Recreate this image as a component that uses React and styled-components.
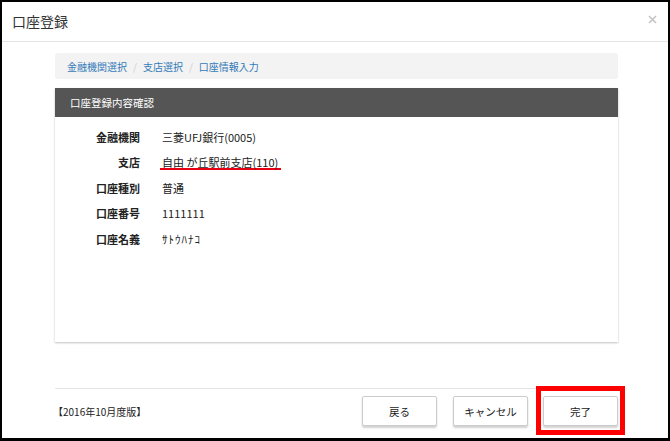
import React from "react";
import styled, { createGlobalStyle } from "styled-components";

const GlobalStyle = createGlobalStyle`
  *, *::before, *::after {
    box-sizing: border-box;
  }
  html, body {
    margin: 0;
    padding: 0;
    background: #fff;
  }
  body {
    font-family: "Noto Sans CJK JP", "Liberation Sans", sans-serif;
    color: #333;
  }
`;

const rows = [
  { label: "金融機関", value: "三菱UFJ銀行(0005)" },
  { label: "支店", value: "自由 が丘駅前支店(110)", marked: true },
  { label: "口座種別", value: "普通" },
  { label: "口座番号", value: "1111111" },
  { label: "口座名義", value: "ｻﾄｳﾊﾅｺ", narrow: true },
];

const App = () => {
  return (
    <>
      <GlobalStyle />
      <Frame>
        <Header>
          <Title>口座登録</Title>
          <CloseButton aria-label="閉じる">
            <svg width="9" height="9" viewBox="0 0 9 9">
              <path d="M1 1L8 8M8 1L1 8" stroke="#c4c4c4" strokeWidth="1.6" />
            </svg>
          </CloseButton>
        </Header>

        <Body>
          <Breadcrumb>
            <Crumb>金融機関選択</Crumb>
            <Sep>/</Sep>
            <Crumb>支店選択</Crumb>
            <Sep>/</Sep>
            <Crumb>口座情報入力</Crumb>
          </Breadcrumb>

          <Panel>
            <PanelHeading>口座登録内容確認</PanelHeading>
            <PanelBody>
              {rows.map((row) => (
                <React.Fragment key={row.label}>
                  <Label>{row.label}</Label>
                  <Value $spaced={row.narrow}>
                    {row.marked ? <Marked>{row.value}</Marked> : row.value}
                  </Value>
                </React.Fragment>
              ))}
            </PanelBody>
          </Panel>

          <Footer>
            <Edition>【2016年10月度版】</Edition>
            <Buttons>
              <Button>戻る</Button>
              <Button>キャンセル</Button>
              <Highlight>
                <Button>完了</Button>
              </Highlight>
            </Buttons>
          </Footer>
        </Body>
      </Frame>
    </>
  );
};

const Frame = styled.div`
  width: 670px;
  height: 441px;
  border: 2px solid #000;
  border-bottom-width: 3px;
  background: #fff;
  display: flex;
  flex-direction: column;
`;

const Header = styled.div`
  height: 40px;
  border-bottom: 1px solid #e5e5e5;
  display: flex;
  align-items: center;
  justify-content: space-between;
  padding: 0 11px 2px 10px;
`;

const Title = styled.h4`
  margin: 0;
  font-size: 14px;
  font-weight: normal;
  color: #333;
`;

const CloseButton = styled.span`
  display: flex;
  align-items: center;
  margin-top: -3px;
`;

const Body = styled.div`
  flex: 1;
  display: flex;
  flex-direction: column;
  padding: 11px 50px 0 53px;
`;

const Breadcrumb = styled.div`
  height: 26px;
  background: #f3f3f3;
  border-radius: 3px;
  display: flex;
  align-items: center;
  padding: 0 12px;
  font-size: 10px;
`;

const Crumb = styled.span`
  color: #337ab7;
`;

const Sep = styled.span`
  color: #ccc;
  padding: 0 6px;
`;

const Panel = styled.div`
  margin-top: 9px;
  background: #fff;
  box-shadow: 0 1px 2px rgba(0, 0, 0, 0.25);
`;

const PanelHeading = styled.div`
  height: 29px;
  background: #555;
  color: #fff;
  font-size: 10.5px;
  display: flex;
  align-items: center;
  padding-left: 15px;
`;

const PanelBody = styled.div`
  height: 225px;
  padding-top: 7px;
  display: grid;
  grid-template-columns: 85px 1fr;
  grid-auto-rows: 25.5px;
  align-content: start;
  column-gap: 22px;
  font-size: 11px;
`;

const Label = styled.div`
  font-weight: bold;
  display: flex;
  align-items: center;
  justify-content: flex-end;
  color: #222;
`;

const Value = styled.div`
  display: flex;
  align-items: center;
  color: #222;
  letter-spacing: ${(p) => (p.$spaced ? "1px" : "0")};
`;

const Marked = styled.span`
  display: inline-block;
  line-height: 12px;
  margin-left: -2px;
  padding: 0 3px 0 2px;
  border-bottom: 2px solid #e60012;
  margin-top: 2px;
`;

const Footer = styled.div`
  margin-top: 46px;
  border-top: 1px solid #e5e5e5;
  padding-top: 7px;
  display: flex;
  align-items: flex-start;
  justify-content: space-between;
`;

const Edition = styled.div`
  font-size: 10px;
  margin-left: -2px;
  margin-top: 8px;
  color: #222;
`;

const Buttons = styled.div`
  display: flex;
  gap: 16px;
`;

const Button = styled.button`
  width: 75px;
  height: 30px;
  background: #fff;
  border: 1px solid #ccc;
  border-radius: 2px;
  box-shadow: 0 2px 2px rgba(0, 0, 0, 0.18);
  font-family: "Noto Sans CJK JP", "Liberation Sans", sans-serif;
  font-size: 10.5px;
  color: #222;
  cursor: pointer;
  padding: 0;
`;

const Highlight = styled.div`
  position: relative;
  margin-left: -1px;

  &::after {
    content: "";
    position: absolute;
    left: -7px;
    right: -7px;
    top: -10px;
    bottom: -9px;
    border: 5px solid #ff0000;
    pointer-events: none;
  }
`;

export default App;
